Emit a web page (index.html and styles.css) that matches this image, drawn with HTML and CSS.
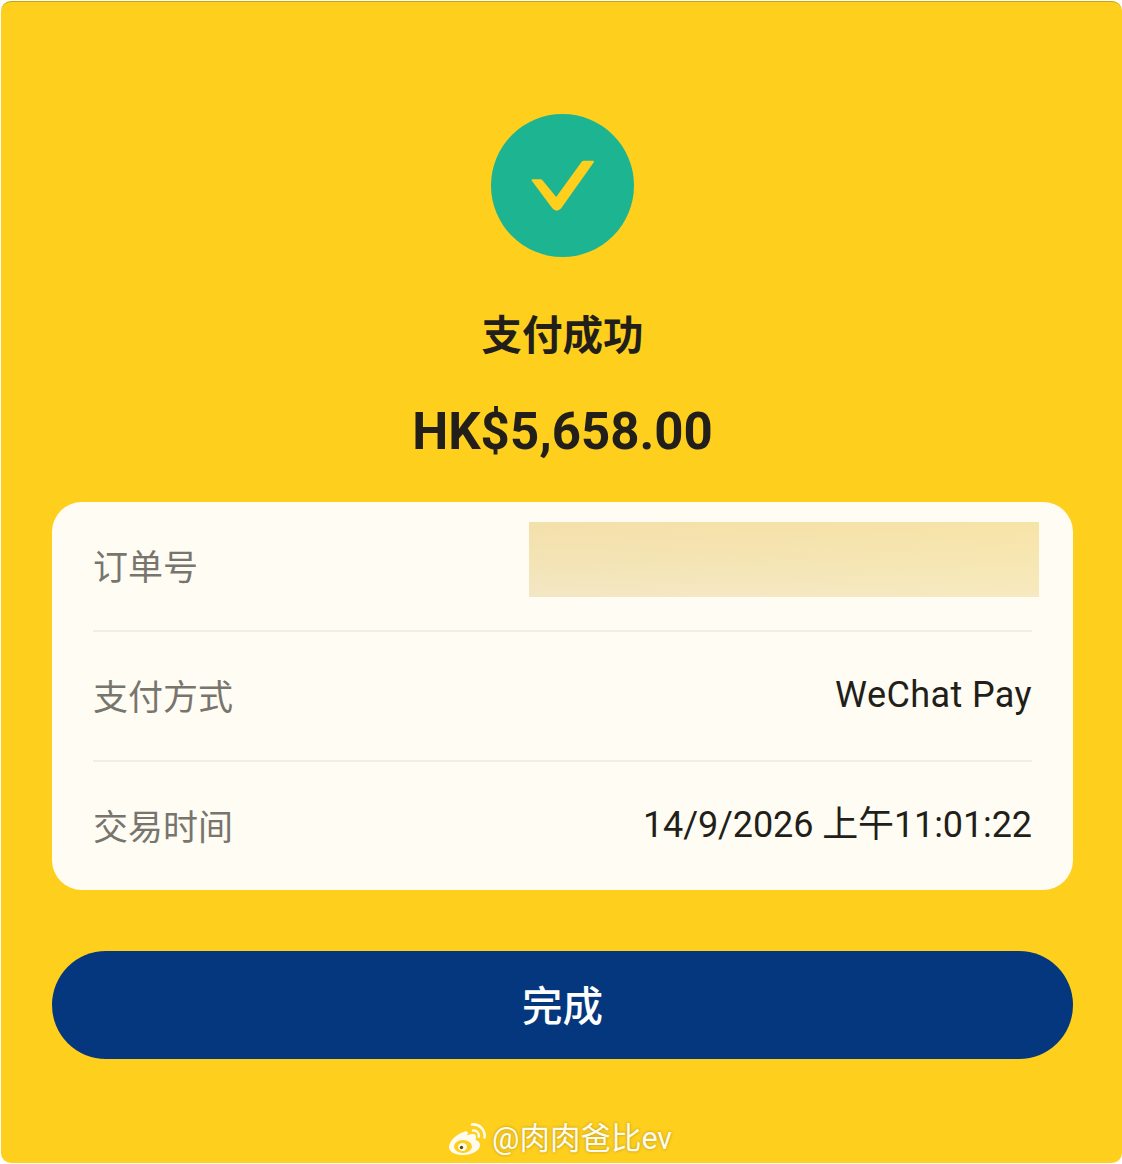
FILE: index.html
```html
<!DOCTYPE html>
<html>
<head>
    <title>支付成功</title>
    <link rel="stylesheet" href="styles.css">
</head>
<body>
    <div class="screen">
        <div class="status-icon">
            <svg width="143" height="143" viewBox="0 0 143 143">
                <circle cx="71.5" cy="71.5" r="71.5" fill="#1db491"/>
                <path d="M41.500 65.300 H49 Q50.700 65.300 51.700 66.600 L65.200 83 L90.500 48 Q91.500 46.700 93 46.700 H102 Q103.800 46.700 102.800 48.200 L70 94.500 Q65.500 98.800 61.500 94.500 L40.800 66.800 Q40 65.300 41.500 65.300 Z" fill="#fecf1d"/>
            </svg>
        </div>
        <div class="title">支付成功</div>
        <div class="amount">HK$5,658.00</div>
        <div class="details">
            <div class="row">
                <span class="label">订单号</span>
            </div>
            <div class="row">
                <span class="label">支付方式</span>
                <span class="value wide">WeChat Pay</span>
            </div>
            <div class="row row-last">
                <span class="label">交易时间</span>
                <span class="value date">14/9/2026 上午11:01:22</span>
            </div>
            <div class="redacted"></div>
        </div>
        <div class="done-btn">完成</div>
        <div class="watermark">
            <svg width="40" height="34" viewBox="0 0 40 34">
                <path d="M17 9.500 C9 11.500 1 19 1 25 C1 30.500 8 33 15.500 33 C24 33 32 28.500 32 23 C32 20 29.500 18.500 27.500 18 C28.500 15.500 28.500 13.500 27 12.500 C24.500 11.500 21 12.500 19.500 13.500 C20.500 10.500 19.500 8.800 17 9.500 Z" fill="#fffbee"/>
                <ellipse cx="15" cy="24.500" rx="9" ry="6.500" fill="#fecf1d"/>
                <ellipse cx="14.500" cy="25" rx="4.500" ry="4" fill="#fffbee"/>
                <circle cx="13.500" cy="25.500" r="1.700" fill="#5a4a1a"/>
                <path d="M24 2.500 C31 1.500 37.500 7.500 36.500 15.500" fill="none" stroke="#fffbee" stroke-width="2.600" stroke-linecap="round"/>
                <path d="M25 8.500 C28.500 8 31.500 11 30.800 14.800" fill="none" stroke="#fffbee" stroke-width="2.400" stroke-linecap="round"/>
            </svg>
            <span>@肉肉爸比ev</span>
        </div>
    </div>
</body>
</html>
```

FILE: styles.css
```css
html, body {
    margin: 0;
    padding: 0;
    background: #fff;
}
body {
    padding: 1px 0 1px 1px;
    width: 1121px;
}
.screen {
    position: relative;
    height: 1162px;
    box-sizing: border-box;
    padding: 112px 49px 0 51px;
    background: #fecf1d;
    border-top: 1px solid #c9a516;
    border-radius: 10px;
    overflow: hidden;
    font-family: Roboto, "Noto Sans CJK SC", sans-serif;
    color: #221f1a;
}
.status-icon {
    display: flex;
    justify-content: center;
    height: 143px;
}
.title {
    margin-top: 51px;
    height: 56px;
    line-height: 56px;
    font-size: 40.500px;
    font-weight: 700;
    text-align: center;
}
.amount {
    margin-top: 33px;
    height: 70px;
    line-height: 70px;
    font-size: 51px;
    font-weight: 700;
    text-align: center;
}
.details {
    position: relative;
    margin-top: 35px;
    height: 388px;
    box-sizing: border-box;
    padding: 0 41px;
    background: #fffcf3;
    border-radius: 30px;
}
.row {
    display: flex;
    justify-content: space-between;
    align-items: center;
    height: 130px;
    box-sizing: border-box;
    padding-bottom: 4px;
    border-bottom: 2px solid #eef0e8;
}
.row-last {
    border-bottom: none;
    height: 128px;
}
.label {
    font-size: 35px;
    color: #77756e;
}
.value {
    font-size: 36px;
    letter-spacing: -0.100px;
    color: #221f1a;
}
.value.wide {
    letter-spacing: 0.400px;
    margin-top: 2px;
}
.value.date {
    margin-bottom: 6px;
}
.redacted {
    position: absolute;
    left: 477px;
    top: 20px;
    width: 510px;
    height: 75px;
    background: linear-gradient(90deg, rgba(240, 220, 170, 0.35), rgba(250, 230, 160, 0.35)), linear-gradient(180deg, #f5e2ab 0%, #f5e7bb 50%, #f5ecd2 100%);
}
.done-btn {
    margin-top: 61px;
    height: 108px;
    box-sizing: border-box;
    padding-top: 5px;
    line-height: 103px;
    background: #04377d;
    border-radius: 54px;
    color: #fff;
    font-size: 40.500px;
    font-weight: 500;
    text-align: center;
}
.watermark {
    position: absolute;
    left: 447px;
    top: 1118px;
    display: flex;
    align-items: center;
    gap: 4px;
    color: #fffbee;
    font-size: 30.500px;
    line-height: 38px;
    text-shadow: 0 0 3px rgba(90, 70, 0, 0.45);
    white-space: nowrap;
}
```
